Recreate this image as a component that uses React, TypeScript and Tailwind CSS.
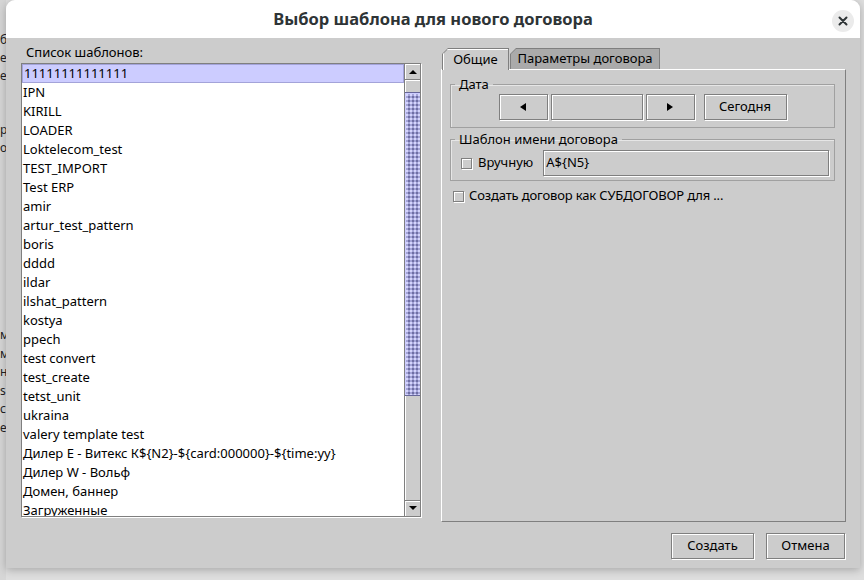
import React from "react";

const items = [
  "11111111111111",
  "IPN",
  "KIRILL",
  "LOADER",
  "Loktelecom_test",
  "TEST_IMPORT",
  "Test ERP",
  "amir",
  "artur_test_pattern",
  "boris",
  "dddd",
  "ildar",
  "ilshat_pattern",
  "kostya",
  "ppech",
  "test convert",
  "test_create",
  "tetst_unit",
  "ukraina",
  "valery template test",
  "Дилер E - Витекс К${N2}-${card:000000}-${time:yy}",
  "Дилер W - Вольф",
  "Домен, баннер",
  "Загруженные",
];

const etched =
  "border border-[#7f7f7f] shadow-[inset_1px_1px_0_#ffffff,1px_1px_0_#ffffff]";

function Btn({ w, children }: { w: string; children?: React.ReactNode }) {
  return (
    <div
      className={`${w} h-[26px] ${etched} bg-[#cccccc] flex items-center justify-center text-[13px] text-black`}
    >
      {children}
    </div>
  );
}

function Check() {
  return (
    <div className="w-[11px] h-[11px] border border-[#7f7f7f] shadow-[inset_1px_1px_0_#ffffff,1px_1px_0_#ffffff] bg-[#cccccc] shrink-0" />
  );
}

export default function App() {
  const leftTop = ["б", "ед", "е", "", "", "р", "от"];
  const leftBottom = ["м", "м", "н", "s", "с", "е"];
  return (
    <div className="w-[864px] h-[580px] bg-[#dedede] flex overflow-hidden font-['Noto_Sans','DejaVu_Sans',sans-serif]">
      {/* background window strip */}
      <div className="w-[6px] shrink-0 h-full bg-[#d6d6d6] overflow-hidden text-[12px] text-[#222] leading-[18px]">
        <div className="h-[31px]" />
        {leftTop.map((t, i) => (
          <div key={i} className="h-[18px] whitespace-nowrap">
            {t}
          </div>
        ))}
        <div className="h-[169px]" />
        {leftBottom.map((t, i) => (
          <div key={i} className="h-[18.5px] whitespace-nowrap">
            {t}
          </div>
        ))}
      </div>

      {/* dialog */}
      <div className="w-[854px] h-[568px] shrink-0 flex flex-col rounded-t-[9px] overflow-hidden shadow-[0_2px_8px_rgba(0,0,0,0.25)]">
        {/* header */}
        <div className="h-[38px] bg-white flex items-center justify-center relative shrink-0">
          <span className="text-[16.5px] font-bold text-[#2e3436]">
            Выбор шаблона для нового договора
          </span>
          <div className="absolute right-[6px] top-[10px] w-[22px] h-[22px] rounded-full bg-[#ebebeb] flex items-center justify-center">
            <svg width="10" height="10" viewBox="0 0 10 10">
              <path d="M1.5 1.5 L8.5 8.5 M8.5 1.5 L1.5 8.5" stroke="#2e3436" strokeWidth="2" strokeLinecap="round" />
            </svg>
          </div>
        </div>

        {/* body */}
        <div className="flex-1 bg-[#cccccc] flex flex-col pt-[6px] text-[13px] text-black">
          <div className="flex h-[478px]">
            {/* left column */}
            <div className="ml-[15px] w-[400px] flex flex-col">
              <div className="h-[16px] pl-[5px] flex items-center leading-none">Список шаблонов:</div>
              <div className="mt-[3px] h-[454px] border border-[#7f7f7f] shadow-[1px_1px_0_#ffffff] bg-white flex overflow-hidden">
                <div className="flex-1 overflow-hidden">
                  {items.map((t, i) => (
                    <div
                      key={i}
                      className={`h-[19px] pl-[1px] flex items-center whitespace-nowrap ${
                        i === 0 ? "bg-[#ccccff] border border-[#a3a3d9] pl-0" : ""
                      }`}
                    >
                      {t}
                    </div>
                  ))}
                </div>
                {/* scrollbar */}
                <div className="w-[16px] shrink-0 flex flex-col bg-[#cccccc] border-l border-[#7f7f7f]">
                  <div className="h-[16px] border-b border-[#7f7f7f] shadow-[inset_1px_1px_0_#ffffff] flex items-center justify-center">
                    <svg width="8" height="5" viewBox="0 0 8 5">
                      <path d="M0 5 L4 1 L8 5 Z" fill="#000" />
                    </svg>
                  </div>
                  <div className="h-[12px] shadow-[inset_1px_1px_0_#ffffff]" />
                  <div className="h-[304px] bg-[#a4a4d8] border-y border-[#666699] shadow-[inset_1px_1px_0_#ccccff] bg-[radial-gradient(#d8d8ff_0.7px,transparent_0.8px),radial-gradient(#6a6aa0_0.7px,transparent_0.8px)] bg-[length:4px_4px] [background-position:0_0,2px_2px]" />
                  <div className="flex-1 shadow-[inset_1px_0_0_#ffffff]" />
                  <div className="h-[16px] border-t border-[#7f7f7f] shadow-[inset_1px_1px_0_#ffffff] flex items-center justify-center">
                    <svg width="8" height="5" viewBox="0 0 8 5">
                      <path d="M0 0 L8 0 L4 4 Z" fill="#000" />
                    </svg>
                  </div>
                </div>
              </div>
            </div>

            {/* right column: tabbed pane */}
            <div className="ml-[20px] w-[405px] mt-[4px] flex flex-col">
              <div className="h-[21px] flex items-end pl-[1px]">
                <div className="w-[67px] bg-[#7f7f7f] [clip-path:polygon(6px_0,100%_0,100%_100%,0_100%,0_6px)] pt-[1px] pl-[1px] pr-[1px] relative z-10 -mb-[1px] h-[22px]">
                  <div className="w-full h-full bg-[#cccccc] [clip-path:polygon(5px_0,100%_0,100%_100%,0_100%,0_5px)] shadow-[inset_1px_1px_0_#ffffff] flex items-center justify-center">
                    Общие
                  </div>
                </div>
                <div className="ml-[1px] w-[150px] h-[21px] bg-[#7f7f7f] [clip-path:polygon(6px_0,100%_0,100%_100%,0_100%,0_6px)] pt-[1px] pl-[1px] pr-[1px]">
                  <div className="w-full h-full bg-[#aaaaaa] [clip-path:polygon(5px_0,100%_0,100%_100%,0_100%,0_5px)] flex items-center justify-center">
                    Параметры договора
                  </div>
                </div>
              </div>
              <div className="flex-1 border border-[#7f7f7f] border-l-white border-t-white bg-[#cccccc] flex flex-col">
                {/* Дата */}
                <fieldset className="mt-[6px] ml-[8px] mr-[10px] border border-[#a0a0a0] shadow-[inset_1px_1px_0_#e6e6e6] pb-[7px]">
                  <legend className="ml-[4px] px-[4px] leading-[16px]">Дата</legend>
                  <div className="mt-[2px] flex justify-center">
                    <div className="flex">
                      <Btn w="w-[49px]">
                        <svg width="6" height="8" viewBox="0 0 6 8">
                          <path d="M6 0 L6 8 L0 4 Z" fill="#000" />
                        </svg>
                      </Btn>
                      <div className={`ml-[3px] w-[92px] h-[26px] ${etched} bg-[#cccccc]`} />
                      <div className="ml-[3px]">
                        <Btn w="w-[49px]">
                          <svg width="6" height="8" viewBox="0 0 6 8">
                            <path d="M0 0 L0 8 L6 4 Z" fill="#000" />
                          </svg>
                        </Btn>
                      </div>
                      <div className="ml-[9px]">
                        <Btn w="w-[83px]">Сегодня</Btn>
                      </div>
                    </div>
                  </div>
                </fieldset>

                {/* Шаблон имени */}
                <fieldset className="mt-[3px] ml-[8px] mr-[10px] border border-[#a0a0a0] shadow-[inset_1px_1px_0_#e6e6e6] pb-[4px]">
                  <legend className="ml-[4px] px-[4px] leading-[16px]">Шаблон имени договора</legend>
                  <div className="mt-[3px] flex items-center pl-[10px] pr-[5px]">
                    <Check />
                    <span className="ml-[6px]">Вручную</span>
                    <div className={`ml-[10px] flex-1 h-[26px] ${etched} bg-[#cccccc] flex items-center pl-[2px]`}>
                      A${"{"}N5{"}"}
                    </div>
                  </div>
                </fieldset>

                <div className="mt-[7px] ml-[11px] h-[16px] flex items-center">
                  <Check />
                  <span className="ml-[5px] tracking-[-0.15px]">Создать договор как СУБДОГОВОР для ...</span>
                </div>
              </div>
            </div>
          </div>

          {/* bottom buttons */}
          <div className="mt-[11px] flex justify-end pr-[15px]">
            <Btn w="w-[83px]">Создать</Btn>
            <div className="ml-[12px]">
              <Btn w="w-[79px]">Отмена</Btn>
            </div>
          </div>
        </div>
      </div>
    </div>
  );
}
